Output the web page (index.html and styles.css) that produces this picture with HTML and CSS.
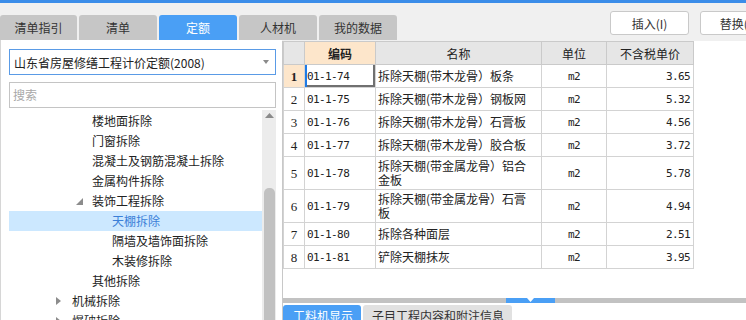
FILE: index.html
```html
<!DOCTYPE html>
<html lang="zh-CN">
<head>
    <meta charset="UTF-8">
    <title>定额</title>
    <link rel="stylesheet" href="styles.css">
</head>
<body>
    <div class="topbar"></div>

    <!-- Tabs + actions -->
    <div class="header">
        <div class="tabs">
            <div class="tab">清单指引</div>
            <div class="tab">清单</div>
            <div class="tab active">定额</div>
            <div class="tab">人材机</div>
            <div class="tab">我的数据</div>
        </div>
        <div class="actions">
            <button class="btn">插入(I)</button>
            <button class="btn">替换(R)</button>
        </div>
    </div>

    <div class="main">
        <!-- Left: quota library tree -->
        <div class="side">
            <div class="select">
                <span>山东省房屋修缮工程计价定额(2008)</span>
                <svg class="caret" width="6" height="4" viewBox="0 0 6 4"><path d="M0 0H6L3 4Z" fill="#8a8a8a"/></svg>
            </div>
            <div class="search">搜索</div>
            <div class="tree">
                <div class="tree-list">
                    <div class="node lv3"><span class="twisty"></span>楼地面拆除</div>
                    <div class="node lv3"><span class="twisty"></span>门窗拆除</div>
                    <div class="node lv3"><span class="twisty"></span>混凝土及钢筋混凝土拆除</div>
                    <div class="node lv3"><span class="twisty"></span>金属构件拆除</div>
                    <div class="node lv3"><span class="twisty"><svg width="7" height="7" viewBox="0 0 7 7"><path d="M7 0V7H0Z" fill="#8c8c8c"/></svg></span>装饰工程拆除</div>
                    <div class="node lv4 selected"><span class="twisty"></span>天棚拆除</div>
                    <div class="node lv4"><span class="twisty"></span>隔墙及墙饰面拆除</div>
                    <div class="node lv4"><span class="twisty"></span>木装修拆除</div>
                    <div class="node lv3"><span class="twisty"></span>其他拆除</div>
                    <div class="node lv2"><span class="twisty"><svg width="5" height="8" viewBox="0 0 5 8"><path d="M0 0L5 4L0 8Z" fill="#8c8c8c"/></svg></span>机械拆除</div>
                    <div class="node lv2"><span class="twisty"><svg width="5" height="8" viewBox="0 0 5 8"><path d="M0 0L5 4L0 8Z" fill="#8c8c8c"/></svg></span>爆破拆除</div>
                </div>
                <div class="vscroll">
                    <svg class="up" width="9" height="5" viewBox="0 0 9 5"><path d="M0 5L4.5 0L9 5Z" fill="#8a8a8a"/></svg>
                    <div class="thumb"></div>
                </div>
            </div>
        </div>

        <!-- Right: quota grid -->
        <div class="grid-panel">
            <div class="grid-area">
                <table class="grid">
                    <colgroup>
                        <col style="width: 21px">
                        <col style="width: 71px">
                        <col style="width: 166px">
                        <col style="width: 65px">
                        <col style="width: 87px">
                    </colgroup>
                    <thead>
                        <tr>
                            <th class="corner"></th>
                            <th class="current">编码</th>
                            <th>名称</th>
                            <th>单位</th>
                            <th>不含税单价</th>
                        </tr>
                    </thead>
                    <tbody>
                        <tr>
                            <td class="rn current">1</td>
                            <td class="code focus">01-1-74</td>
                            <td class="name">拆除天棚(带木龙骨）板条</td>
                            <td class="unit">m2</td>
                            <td class="price">3.65</td>
                        </tr>
                        <tr>
                            <td class="rn">2</td>
                            <td class="code">01-1-75</td>
                            <td class="name">拆除天棚(带木龙骨）钢板网</td>
                            <td class="unit">m2</td>
                            <td class="price">5.32</td>
                        </tr>
                        <tr>
                            <td class="rn">3</td>
                            <td class="code">01-1-76</td>
                            <td class="name">拆除天棚(带木龙骨）石膏板</td>
                            <td class="unit">m2</td>
                            <td class="price">4.56</td>
                        </tr>
                        <tr>
                            <td class="rn">4</td>
                            <td class="code">01-1-77</td>
                            <td class="name">拆除天棚(带木龙骨）胶合板</td>
                            <td class="unit">m2</td>
                            <td class="price">3.72</td>
                        </tr>
                        <tr class="tall">
                            <td class="rn">5</td>
                            <td class="code">01-1-78</td>
                            <td class="name">拆除天棚(带金属龙骨）铝合<br>金板</td>
                            <td class="unit">m2</td>
                            <td class="price">5.78</td>
                        </tr>
                        <tr class="tall">
                            <td class="rn">6</td>
                            <td class="code">01-1-79</td>
                            <td class="name">拆除天棚(带金属龙骨）石膏<br>板</td>
                            <td class="unit">m2</td>
                            <td class="price">4.94</td>
                        </tr>
                        <tr>
                            <td class="rn">7</td>
                            <td class="code">01-1-80</td>
                            <td class="name">拆除各种面层</td>
                            <td class="unit">m2</td>
                            <td class="price">2.51</td>
                        </tr>
                        <tr>
                            <td class="rn">8</td>
                            <td class="code">01-1-81</td>
                            <td class="name">铲除天棚抹灰</td>
                            <td class="unit">m2</td>
                            <td class="price">3.95</td>
                        </tr>
                    </tbody>
                </table>
            </div>

            <div class="hscroll">
                <div class="hthumb">
                    <svg width="7" height="4" viewBox="0 0 7 4"><path d="M0 0H7L3.5 4Z" fill="#ffffff"/></svg>
                </div>
            </div>

            <div class="bottom-tabs">
                <div class="btab active">工料机显示</div>
                <div class="btab">子目工程内容和附注信息</div>
            </div>
        </div>
    </div>
</body>
</html>
```

FILE: styles.css
```css
/* Global */
body, html {
    margin: 0;
    padding: 0;
    width: 746px;
    height: 320px;
    overflow: hidden;
    background-color: #f0f0f0;
    font-family: "Noto Sans CJK SC", "Liberation Sans", sans-serif;
    font-size: 12px;
    color: #222;
}

.topbar {
    height: 3px;
    background-color: #3b8de9;
}

/* Header tabs */
.header {
    display: flex;
    height: 37px;
}

.tabs {
    display: flex;
    align-self: flex-end;
    gap: 2px;
}

.tab {
    width: 78px;
    height: 25px;
    line-height: 25px;
    text-align: center;
    background-color: #c6c6c6;
    color: #333;
    border-radius: 3px 3px 0 0;
}

.tab:first-child {
    width: 77px;
}

.tab.active {
    background-color: #4a9ff5;
    color: #fff;
}

.actions {
    display: flex;
    gap: 11px;
    width: 136px;
    margin-left: auto;
    padding-top: 8px;
    flex: none;
}

.btn {
    flex: none;
    width: 79px;
    height: 24px;
    padding: 0;
    border: 1px solid #c9c9c9;
    border-radius: 3px;
    background-color: #fff;
    font-family: inherit;
    font-size: 12px;
    color: #333;
}

/* Main area */
.main {
    display: flex;
    height: 280px;
}

/* Left side */
.side {
    width: 282px;
    box-sizing: border-box;
    border-left: 1px solid #d6d6d6;
    background-color: #fff;
    padding: 9px 0 0 8px;
    display: flex;
    flex-direction: column;
}

.select {
    width: 267px;
    height: 26px;
    box-sizing: border-box;
    border: 1px solid #5a9be6;
    display: flex;
    align-items: center;
    justify-content: space-between;
    padding: 0 6px 0 4px;
}

.search {
    width: 267px;
    height: 26px;
    box-sizing: border-box;
    border: 1px solid #c4c4c4;
    margin-top: 7px;
    line-height: 24px;
    padding-left: 3px;
    color: #a8a8a8;
}

.tree {
    display: flex;
    width: 267px;
    margin-top: 2px;
    flex: 1;
    overflow: hidden;
}

.tree-list {
    flex: 1;
    padding-top: 1px;
}

.node {
    height: 20px;
    line-height: 20px;
    display: flex;
    align-items: center;
    white-space: nowrap;
}

.node.lv2 { padding-left: 47px; }
.node.lv3 { padding-left: 67px; }
.node.lv4 { padding-left: 87px; }

.node.selected {
    background-color: #cce8ff;
    color: #3b7fd8;
}

.twisty {
    width: 16px;
    height: 20px;
    display: flex;
    align-items: center;
    flex: none;
}

.vscroll {
    width: 14px;
    background-color: #ececec;
    display: flex;
    flex-direction: column;
    align-items: center;
}

.vscroll .up {
    margin-top: 3px;
}

.vscroll .thumb {
    width: 11px;
    margin-top: 70px;
    flex: 1;
    background-color: #c1c1c1;
    border-radius: 5px 5px 0 0;
}

/* Grid panel */
.grid-panel {
    flex: 1;
    margin-top: 1px;
    border-left: 1px solid #c8c8c8;
    background-color: #fff;
    overflow: hidden;
}

.grid-area {
    height: 257px;
}

.grid {
    border-collapse: collapse;
    table-layout: fixed;
    width: 410px;
}

.grid th,
.grid td {
    border: 1px solid #d3d3d3;
    padding: 0 2px;
    white-space: nowrap;
    overflow: hidden;
}

.grid th {
    height: 22px;
    background-color: #e6e6e6;
    border-color: #cacaca;
    font-weight: normal;
    color: #222;
}

.grid th.current {
    background-color: #fde6cb;
    font-weight: bold;
}

.grid td {
    height: 22px;
    line-height: 15px;
}

.grid tr.tall td {
    height: 32px;
}

.grid td.name {
    line-height: 14px;
}

.grid td.rn {
    text-align: center;
    font-family: "Liberation Serif", serif;
    font-size: 13px;
}

.grid td.rn.current {
    background-color: #fde6cb;
    font-weight: bold;
}

.grid td.code,
.grid td.unit,
.grid td.price {
    font-family: "DejaVu Sans Mono", monospace;
    font-size: 11px;
    letter-spacing: -0.6px;
}

.grid td.focus {
    box-shadow: inset 2px 0 0 #1e7be6, inset -2px -2px 0 #707070;
}

.grid td.unit {
    text-align: center;
}

.grid td.price {
    text-align: right;
    padding-right: 3px;
}

/* Horizontal scroll */
.hscroll {
    height: 5px;
    background-color: #c2c2c2;
    margin-bottom: 2px;
}

.hthumb {
    width: 49px;
    height: 5px;
    margin-left: 223px;
    background-color: #4a9ff5;
    display: flex;
    justify-content: center;
    align-items: flex-start;
}

.hthumb svg {
    display: block;
}

/* Bottom tabs */
.bottom-tabs {
    display: flex;
    gap: 2px;
}

.btab {
    height: 22px;
    line-height: 22px;
    padding: 0 8px 0 9px;
    background-color: #e1e1e1;
    color: #333;
    border-radius: 3px 3px 0 0;
    white-space: nowrap;
}

.btab.active {
    width: 60px;
    padding: 0 8px 0 10px;
    background-color: #4a9ff5;
    color: #fff;
}
```
